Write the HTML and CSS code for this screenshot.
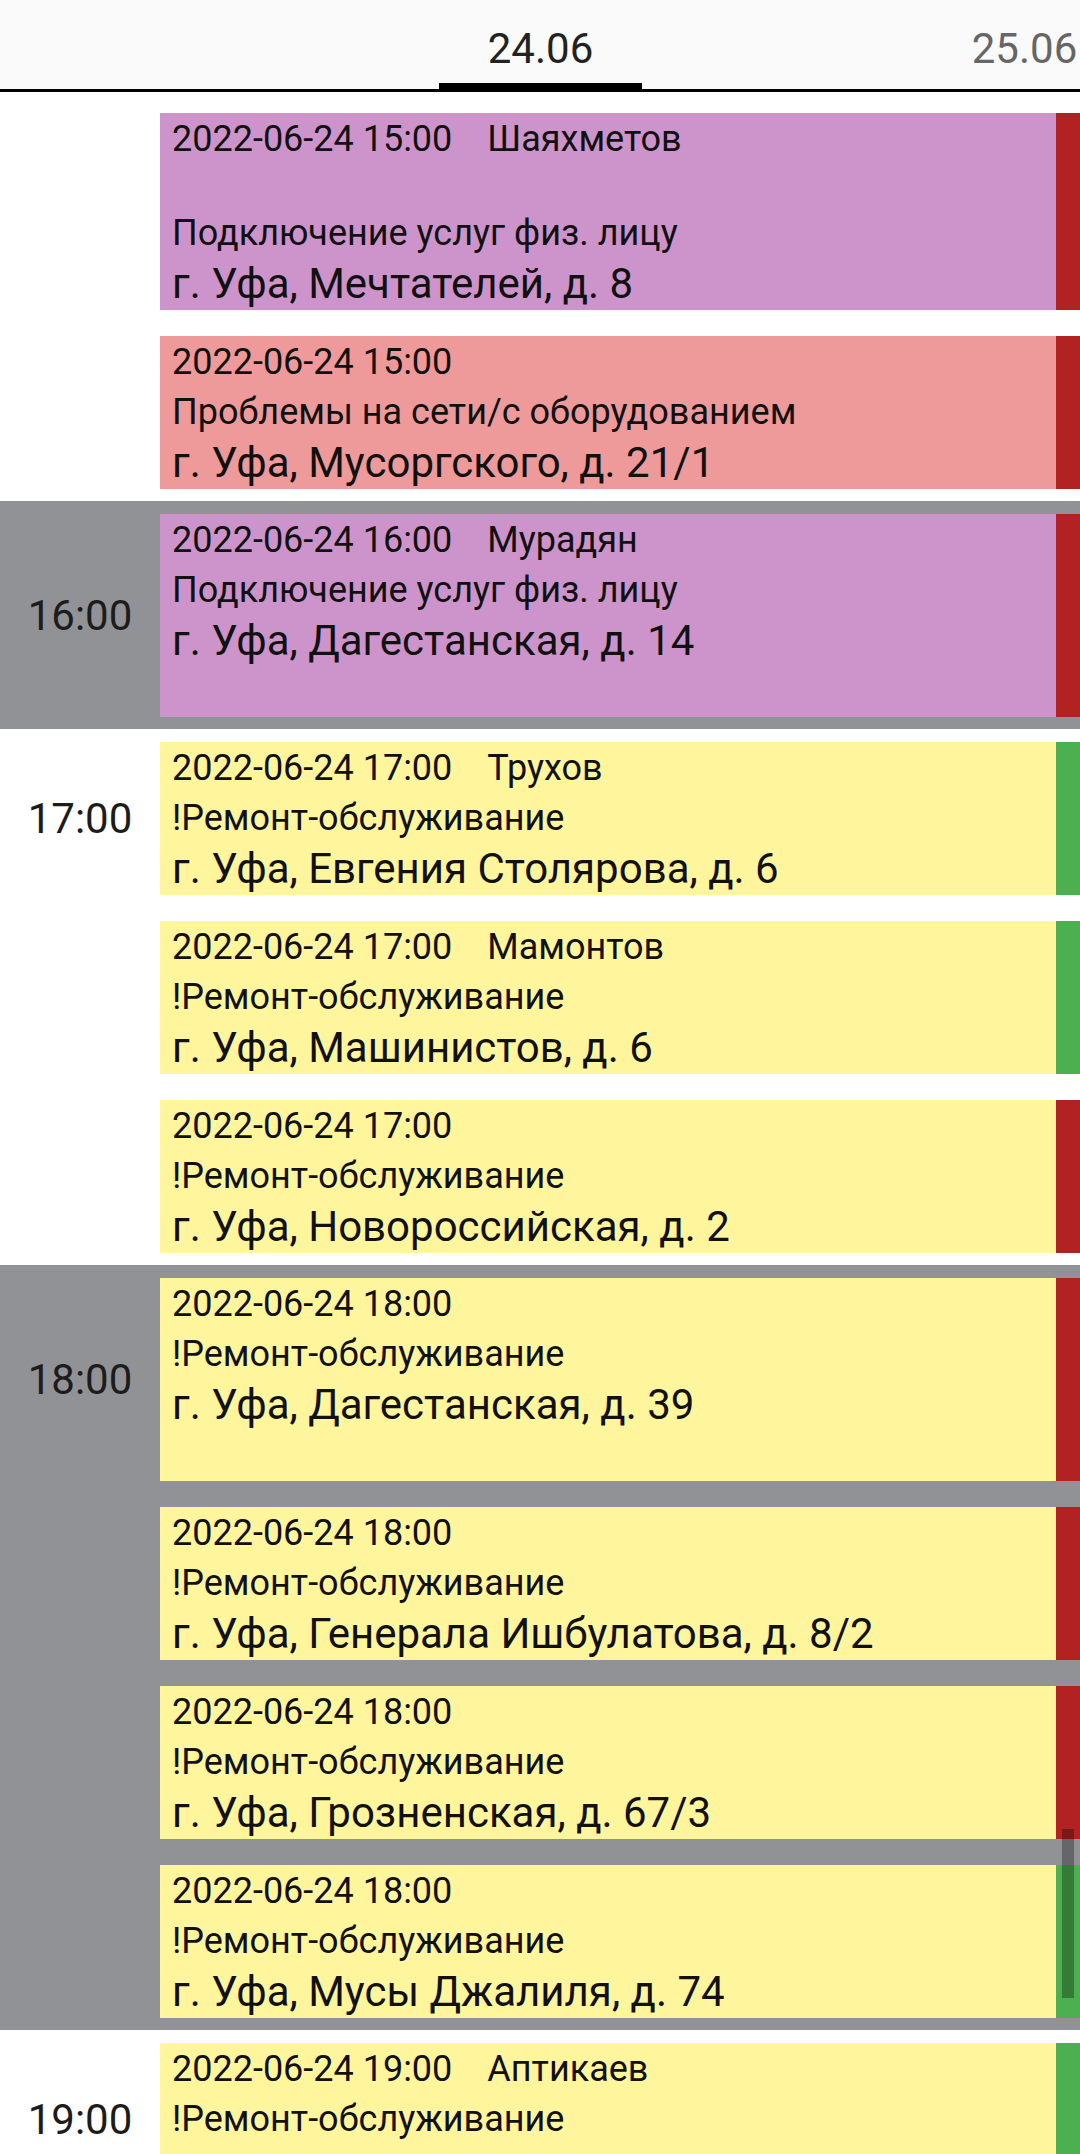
FILE: index.html
```html
<!DOCTYPE html>
<html lang="ru">
<head>
<meta charset="utf-8">
<title>Заявки</title>
<link rel="stylesheet" href="styles.css">
</head>
<body>
<div class="screen">
  <header class="tabs">
    <div class="tab active">24.06</div>
    <div class="tab">25.06</div>
  </header>
  <main class="list">
    <section class="group first">
      <article class="card">
        <div class="card-body purple">
          <div class="l1">2022-06-24 15:00<span class="who">Шаяхметов</span></div>
          <div class="blank-mid"></div>
          <div class="l2">Подключение услуг физ. лицу</div>
          <div class="l3">г. Уфа, Мечтателей, д. 8</div>
        </div>
        <div class="strip red"></div>
      </article>
      <article class="card">
        <div class="card-body pink">
          <div class="l1">2022-06-24 15:00</div>
          <div class="l2">Проблемы на сети/с оборудованием</div>
          <div class="l3">г. Уфа, Мусоргского, д. 21/1</div>
        </div>
        <div class="strip red"></div>
      </article>
    </section>

    <section class="group gray">
      <div class="hour">16:00</div>
      <article class="card">
        <div class="card-body purple">
          <div class="l1">2022-06-24 16:00<span class="who">Мурадян</span></div>
          <div class="l2">Подключение услуг физ. лицу</div>
          <div class="l3">г. Уфа, Дагестанская, д. 14</div>
          <div class="blank-end"></div>
        </div>
        <div class="strip red"></div>
      </article>
    </section>

    <section class="group">
      <div class="hour">17:00</div>
      <article class="card">
        <div class="card-body yellow">
          <div class="l1">2022-06-24 17:00<span class="who">Трухов</span></div>
          <div class="l2">!Ремонт-обслуживание</div>
          <div class="l3">г. Уфа, Евгения Столярова, д. 6</div>
        </div>
        <div class="strip green"></div>
      </article>
      <article class="card">
        <div class="card-body yellow">
          <div class="l1">2022-06-24 17:00<span class="who">Мамонтов</span></div>
          <div class="l2">!Ремонт-обслуживание</div>
          <div class="l3">г. Уфа, Машинистов, д. 6</div>
        </div>
        <div class="strip green"></div>
      </article>
      <article class="card">
        <div class="card-body yellow">
          <div class="l1">2022-06-24 17:00</div>
          <div class="l2">!Ремонт-обслуживание</div>
          <div class="l3">г. Уфа, Новороссийская, д. 2</div>
        </div>
        <div class="strip red"></div>
      </article>
    </section>

    <section class="group gray">
      <div class="hour">18:00</div>
      <article class="card">
        <div class="card-body yellow">
          <div class="l1">2022-06-24 18:00</div>
          <div class="l2">!Ремонт-обслуживание</div>
          <div class="l3">г. Уфа, Дагестанская, д. 39</div>
          <div class="blank-end"></div>
        </div>
        <div class="strip red"></div>
      </article>
      <article class="card">
        <div class="card-body yellow">
          <div class="l1">2022-06-24 18:00</div>
          <div class="l2">!Ремонт-обслуживание</div>
          <div class="l3">г. Уфа, Генерала Ишбулатова, д. 8/2</div>
        </div>
        <div class="strip red"></div>
      </article>
      <article class="card">
        <div class="card-body yellow">
          <div class="l1">2022-06-24 18:00</div>
          <div class="l2">!Ремонт-обслуживание</div>
          <div class="l3">г. Уфа, Грозненская, д. 67/3</div>
        </div>
        <div class="strip red"></div>
      </article>
      <article class="card">
        <div class="card-body yellow">
          <div class="l1">2022-06-24 18:00</div>
          <div class="l2">!Ремонт-обслуживание</div>
          <div class="l3">г. Уфа, Мусы Джалиля, д. 74</div>
        </div>
        <div class="strip green"></div>
      </article>
    </section>

    <section class="group">
      <div class="hour">19:00</div>
      <article class="card">
        <div class="card-body yellow">
          <div class="l1">2022-06-24 19:00<span class="who">Аптикаев</span></div>
          <div class="l2">!Ремонт-обслуживание</div>
          <div class="l3 hidden-line">&nbsp;</div>
        </div>
        <div class="strip green"></div>
      </article>
    </section>
  </main>
  <div class="scrollbar"></div>
</div>
</body>
</html>
```

FILE: styles.css
```css
html, body {
  margin: 0;
  padding: 0;
  background: #ffffff;
}

.screen {
  position: relative;
  width: 1080px;
  height: 2154px;
  overflow: hidden;
  background: #ffffff;
  font-family: Roboto, "Noto Sans", "Liberation Sans", sans-serif;
  color: #111111;
}

/* ---------- tabs ---------- */
.tabs {
  display: flex;
  gap: 281px;
  height: 89px;
  padding-left: 439px;
  background: #fafafa;
  border-bottom: 3px solid #000000;
  overflow: hidden;
  white-space: nowrap;
}

.tab {
  position: relative;
  flex: 0 0 203px;
  box-sizing: border-box;
  padding-top: 24px;
  font-size: 42px;
  line-height: 50px;
  text-align: center;
  color: #666666;
}

.tab.active {
  color: #222222;
}

.tab.active::after {
  content: "";
  position: absolute;
  left: 0;
  right: 0;
  bottom: 0;
  height: 6px;
  background: #000000;
}

/* ---------- list ---------- */
.group {
  display: grid;
  grid-template-columns: 160px 1fr;
  row-gap: 26px;
  padding: 13px 0 12px;
  background: #ffffff;
}

.group.first {
  padding-top: 21px;
}

.group.gray {
  background: #909296;
}

.hour {
  grid-column: 1;
  grid-row: 1;
  align-self: center;
  text-align: center;
  font-size: 42px;
  line-height: 50px;
  color: #1c1c1c;
}

.card {
  grid-column: 2;
  display: flex;
}

.card-body {
  flex: 1;
  min-width: 0;
  padding: 1px 0 1px 12px;
}

.purple { background: #cd94cc; }
.pink   { background: #ee9a9a; }
.yellow { background: #fff59d; }

.strip {
  flex: 0 0 24px;
}

.red   { background: #b22222; }
.green { background: #4caf50; }

.l1,
.l2 {
  font-size: 36px;
  line-height: 50px;
  white-space: nowrap;
}

.l3 {
  font-size: 42px;
  line-height: 51px;
  white-space: nowrap;
}

.who {
  margin-left: 35px;
}

.blank-mid {
  height: 44px;
}

.blank-end {
  height: 50px;
}

/* ---------- scrollbar overlay ---------- */
.scrollbar {
  position: absolute;
  left: 1062px;
  top: 1829px;
  width: 12px;
  height: 169px;
  background: rgba(0, 0, 0, 0.3);
}
```
